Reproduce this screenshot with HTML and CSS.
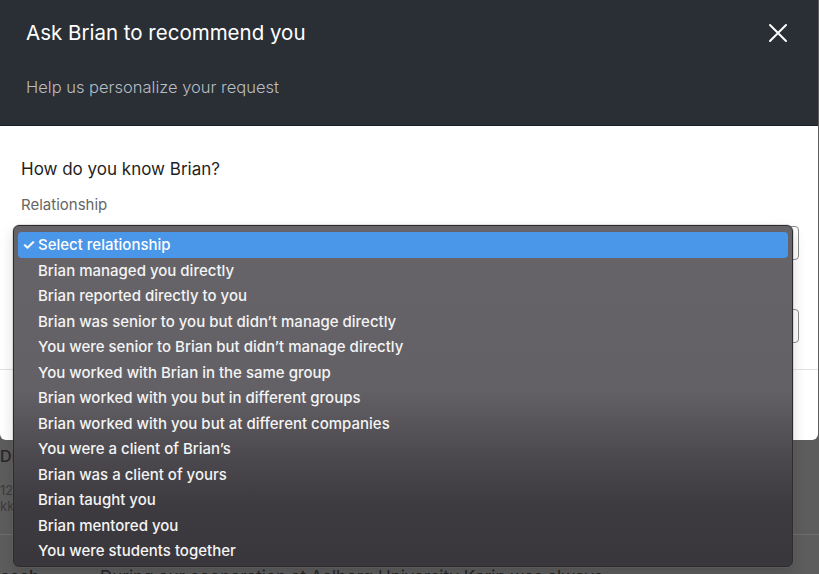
FILE: index.html
```html
<!DOCTYPE html>
<html lang="en">
<head>
<meta charset="utf-8">
<title>Ask Brian to recommend you</title>
<link rel="stylesheet" href="styles.css">
</head>
<body>
<div class="page">
  <div class="page-row title-row">Director of Research</div>
  <div class="page-meta">
    <div>12 Jan 2020</div>
    <div>kkarin worked with Brian</div>
  </div>
  <div class="page-row quote-row">
    <span class="quote-label">esch</span>
    <span class="quote-text">During our cooperation at Aalborg University Karin was always</span>
  </div>
</div>

<div class="modal">
  <header class="modal-head">
    <div class="head-top">
      <h1 class="modal-title">Ask Brian to recommend you</h1>
      <button class="close" aria-label="Close">
        <svg width="20" height="20" viewBox="0 0 20 20"><path d="M2 2 L18 18 M18 2 L2 18" stroke="#fff" stroke-width="2" stroke-linecap="round"/></svg>
      </button>
    </div>
    <p class="modal-sub">Help us personalize your request</p>
  </header>
  <div class="modal-body">
    <h2 class="question">How do you know Brian?</h2>
    <div class="field-label">Relationship</div>
    <div class="field"></div>
    <div class="field field-2"></div>
  </div>
  <div class="modal-foot"></div>
</div>

<ul class="menu">
  <li class="item selected"><span class="check">✓</span>Select relationship</li>
  <li class="item">Brian managed you directly</li>
  <li class="item">Brian reported directly to you</li>
  <li class="item">Brian was senior to you but didn’t manage directly</li>
  <li class="item">You were senior to Brian but didn’t manage directly</li>
  <li class="item">You worked with Brian in the same group</li>
  <li class="item">Brian worked with you but in different groups</li>
  <li class="item">Brian worked with you but at different companies</li>
  <li class="item">You were a client of Brian’s</li>
  <li class="item">Brian was a client of yours</li>
  <li class="item">Brian taught you</li>
  <li class="item">Brian mentored you</li>
  <li class="item">You were students together</li>
</ul>
</body>
</html>
```

FILE: styles.css
```css
html, body {
  margin: 0;
  padding: 0;
}
body {
  width: 819px;
  height: 574px;
  overflow: hidden;
  background: #5d5d5d;
  font-family: Inter, "Noto Sans", "Liberation Sans", sans-serif;
  position: relative;
}

/* background page (dimmed) */
.page {
  padding-top: 446px;
  color: #262626;
}
.page-row {
  display: flex;
}
.title-row {
  font-size: 16px;
  font-weight: 500;
  height: 22px;
}
.page-meta {
  margin-top: 14px;
  font-size: 13px;
  line-height: 16px;
  color: #3c3c3c;
  padding-bottom: 20px;
  border-bottom: 1px solid #6e6e6e;
}
.quote-row {
  margin-top: 32px;
  font-size: 17px;
}
.quote-label {
  width: 100px;
  font-weight: 500;
}

/* modal */
.modal {
  position: absolute;
  top: 0;
  left: 0;
  width: 818px;
  height: 440px;
  background: #fff;
  border-radius: 0 0 6px 6px;
  overflow: hidden;
}
.modal-head {
  background: #2a2f36;
  height: 126px;
  border-bottom: 1px solid #1c2026;
  padding: 0 0 0 26px;
  box-sizing: border-box;
  color: #fff;
}
.head-top {
  display: flex;
  align-items: center;
  justify-content: space-between;
  padding-top: 19px;
  padding-right: 30px;
}
.modal-title {
  margin: 0;
  font-size: 20.5px;
  font-weight: 400;
  line-height: 28px;
  letter-spacing: 0;
}
.close {
  background: none;
  border: 0;
  padding: 0;
  width: 20px;
  height: 20px;
  display: flex;
}
.modal-sub {
  margin: 29px 0 0;
  font-size: 16.5px;
  font-weight: 300;
  color: #b9bdc3;
  line-height: 22px;
}
.modal-body {
  padding: 31px 19px 0 21px;
  height: 244px;
  box-sizing: border-box;
  border-bottom: 1px solid #e3e3e3;
}
.question {
  margin: 0;
  font-size: 17px;
  font-weight: 400;
  color: #1f1f1f;
  line-height: 24px;
}
.field-label {
  margin-top: 15px;
  font-size: 15px;
  color: #666;
  line-height: 18px;
}
.field {
  margin-top: 12px;
  height: 32px;
  border: 1px solid #8c8c8c;
  border-radius: 4px;
}
.field-2 {
  margin-top: 49px;
}

/* native select menu */
.menu {
  position: absolute;
  left: 13px;
  top: 225px;
  width: 780px;
  height: 342px;
  margin: 0;
  padding: 6px 0 0;
  box-sizing: border-box;
  list-style: none;
  border: 1px solid #2c2b2e;
  border-radius: 6px;
  background: linear-gradient(#666469 0%, #636166 48%, #4c494e 68%, #3e3b40 82%, #3a373c 100%);
  box-shadow: 0 0 0 0.5px rgba(120,120,120,0.4), 0 6px 14px rgba(0,0,0,0.15);
}
.item {
  position: relative;
  height: 25.5px;
  line-height: 25.5px;
  margin: 0 4px;
  padding-left: 20px;
  font-size: 15px;
  font-weight: 500;
  color: #f4f4f4;
  border-radius: 4px;
  white-space: nowrap;
}
.item.selected {
  background: #4a96e8;
  color: #fff;
}
.check {
  position: absolute;
  left: 4px;
  top: 0;
  font-size: 15px;
  font-weight: 600;
}
```
